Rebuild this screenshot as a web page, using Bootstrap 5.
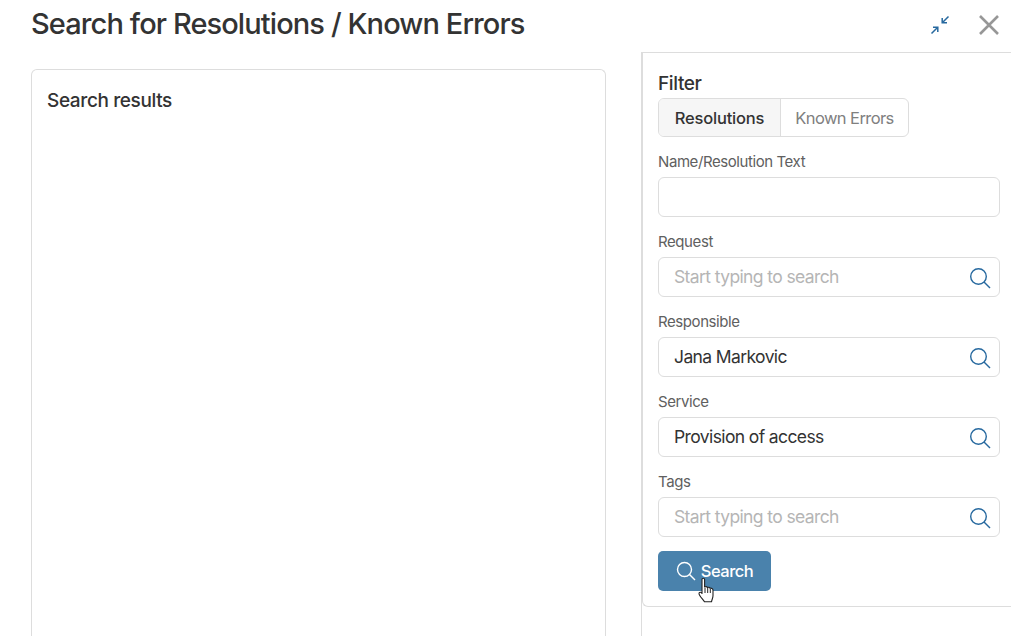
<!DOCTYPE html>
<html lang="en"><head><meta charset="utf-8"><title>Search</title>
<link href="https://cdn.jsdelivr.net/npm/bootstrap@5.3.0/dist/css/bootstrap.min.css" rel="stylesheet">
<style>
html,body{height:636px;overflow:hidden}
body{font-family:Inter,"Liberation Sans",sans-serif;color:#333;background:#fff}
.page-head{height:52px;padding:6px 12px 0 31px}
.page-head h1{font-size:29px;line-height:36px;font-weight:550;margin:0;color:#333;letter-spacing:-.031em}
.head-tools{gap:29px;padding-top:9px}
.body-row{height:584px}
.results-col{width:641px;padding:17px 35px 0 31px;flex:none}
.results-box{height:567px;border:1px solid #ddd;border-bottom:0;border-radius:6px 6px 0 0;padding:20px 15px}
.results-box h2{font-size:19px;line-height:22px;font-weight:550;margin:0;letter-spacing:-.02em}
.filter-rail{width:370px;flex:none;border-left:1px solid #ddd}
.filter-panel{height:555px;border:1px solid #ddd;border-right:0;border-radius:0 0 0 6px;padding:20px 11px 0 15px}
.filter-panel h3{font-size:19px;line-height:22px;font-weight:550;margin:0 0 3px;letter-spacing:-.02em}
.seg{width:251px;height:39px;border:1px solid #ddd;border-radius:6px;overflow:hidden;font-size:16.5px;letter-spacing:-.035em}
.seg span{display:flex;align-items:center;justify-content:center;height:100%;padding-top:1px}
.seg-on{width:122px;background:#f6f6f6;border-right:1px solid #ddd;font-weight:550;letter-spacing:-.012em}
.seg-off{flex:1;color:#808080}
.fld{margin-top:16px}
.fld label{display:block;font-size:15px;line-height:18px;color:#606060;margin-bottom:6px;letter-spacing:-.028em}
.fld-box{height:40px;border:1px solid #ddd;border-radius:6px;padding:1px 8px 0 15px;font-size:17.5px;letter-spacing:-.035em}
.fld-box.ph{color:#b5b5b5}
.go-btn{width:113px;height:40px;margin-top:14px;background:#4a82ac;border:0;border-radius:5px;color:#fff;font-weight:550;font-size:16.5px;gap:5px;padding:0;letter-spacing:-.03em}
.go-btn:hover{background:#4a82ac;color:#fff}
.hand{position:absolute;left:698px;top:577px}
</style></head><body>
<div class="page-head d-flex justify-content-between align-items-start">
<h1>Search for Resolutions / Known Errors</h1>
<div class="head-tools d-flex align-items-center">
<svg width="20" height="20" viewBox="0 0 20 20" fill="none" stroke="#27699f" stroke-width="1.5"><path d="M1.500 18.500 7.500 12.500M3 12.200H7.800V17M18.500 1.500 12.500 7.500M12.200 3V7.800H17"/></svg>
<svg width="20" height="20" viewBox="0 0 20 20" fill="none" stroke="#979797" stroke-width="2.6"><path d="M1 1 19 19M19 1 1 19"/></svg>
</div></div>
<div class="body-row d-flex">
<div class="results-col"><div class="results-box"><h2>Search results</h2></div></div>
<div class="filter-rail"><div class="filter-panel">
<h3>Filter</h3>
<div class="seg d-flex"><span class="seg-on">Resolutions</span><span class="seg-off">Known Errors</span></div>
<div class="fld"><label>Name/Resolution Text</label><div class="fld-box"></div></div>
<div class="fld"><label>Request</label><div class="fld-box ph d-flex align-items-center justify-content-between">Start typing to search<svg width="22" height="22" viewBox="0 0 22 22" fill="none" stroke="#27699f" stroke-width="1.4"><circle cx="9.500" cy="9.500" r="7.800"/><path d="M15 15 21 21"/></svg></div></div>
<div class="fld"><label>Responsible</label><div class="fld-box d-flex align-items-center justify-content-between">Jana Markovic<svg width="22" height="22" viewBox="0 0 22 22" fill="none" stroke="#27699f" stroke-width="1.4"><circle cx="9.500" cy="9.500" r="7.800"/><path d="M15 15 21 21"/></svg></div></div>
<div class="fld"><label>Service</label><div class="fld-box d-flex align-items-center justify-content-between">Provision of access<svg width="22" height="22" viewBox="0 0 22 22" fill="none" stroke="#27699f" stroke-width="1.4"><circle cx="9.500" cy="9.500" r="7.800"/><path d="M15 15 21 21"/></svg></div></div>
<div class="fld"><label>Tags</label><div class="fld-box ph d-flex align-items-center justify-content-between">Start typing to search<svg width="22" height="22" viewBox="0 0 22 22" fill="none" stroke="#27699f" stroke-width="1.4"><circle cx="9.500" cy="9.500" r="7.800"/><path d="M15 15 21 21"/></svg></div></div>
<button class="btn go-btn d-flex align-items-center justify-content-center" type="button"><svg width="20" height="20" viewBox="0 0 20 20" fill="none" stroke="#fff" stroke-width="1.4"><circle cx="8.500" cy="8.500" r="7"/><path d="M13.500 13.500 19 19"/></svg>Search</button>
</div></div></div>
<svg class="hand" width="18" height="27" viewBox="0 0 18 27"><path d="M4 2.500C4 .8 6.600 .8 6.600 2.500V10C8 9.300 9 9.600 9.400 10.400 10.600 10 11.600 10.400 12 11.300 13.400 10.900 15 11.500 15 13.300V18.500C15 21 14 22 13.500 24.800H6.500C5.500 22.500 1 19 1 16.500 1 15 3 14.800 4 16.500Z" fill="#fff" stroke="#222" stroke-width="1.1" stroke-linejoin="round"/><path d="M7 11V16M9.700 11V16M12.300 12V16" stroke="#222" stroke-width="1"/></svg>
</body></html>
